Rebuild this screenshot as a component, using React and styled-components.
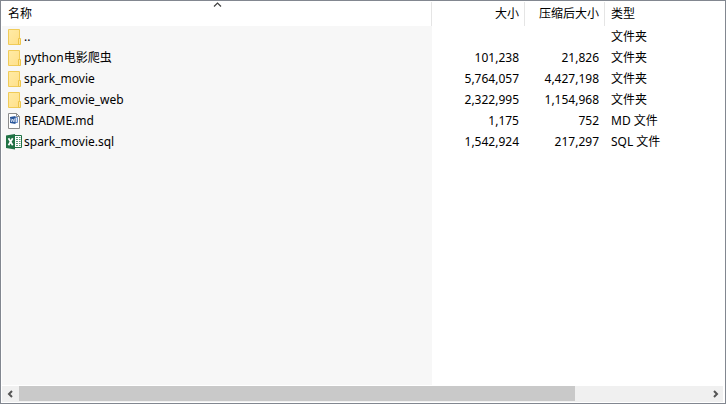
import React, { useState } from 'react';
import styled, { createGlobalStyle } from 'styled-components';

const GlobalStyle = createGlobalStyle`
  * {
    box-sizing: border-box;
  }

  body {
    margin: 0;
    background: #ffffff;
    color: #000000;
    font-family: 'Noto Sans', 'Noto Sans CJK SC', sans-serif;
    font-size: 12px;
    line-height: 16px;
  }
`;

const Window = styled.main`
  display: flex;
  flex-direction: column;
  min-height: 100vh;
  padding: 1px;
  border: 1px solid #828790;
  background: #ffffff;
`;

const Pane = styled.div`
  flex: 1;
  margin-bottom: 1px;
  background: linear-gradient(#f7f7f7, #f7f7f7) 0 24px / calc(100% - 292px) 100% no-repeat;
`;

const Table = styled.table`
  width: 100%;
  table-layout: fixed;
  border-collapse: separate;
  border-spacing: 0;
`;

const Col = styled.col`
  width: ${props => props.$width || 'auto'};
`;

const HeadCell = styled.th`
  position: relative;
  height: 24px;
  padding: 0;
  font-weight: normal;
  border-right: ${props => (props.$last ? 'none' : '1px solid #e5e5e5')};
`;

const HeadButton = styled.button`
  display: block;
  width: 100%;
  height: 24px;
  padding: 0 5px 0 6px;
  border: none;
  background: none;
  color: inherit;
  font: inherit;
  text-align: ${props => props.$align || 'left'};
  cursor: default;
`;

const SortMark = styled.svg`
  position: absolute;
  top: 0;
  left: 50%;
  width: 9px;
  height: 5px;
  margin-left: -4px;
`;

const Cell = styled.td`
  height: 21px;
  padding: 0 6px;
  text-align: ${props => props.$align || 'left'};
  white-space: nowrap;
  overflow: hidden;
`;

const NameCell = styled(Cell)`
  padding: 0 4px;
`;

const FileName = styled.div`
  display: flex;
  align-items: center;
  gap: 2px;

  svg {
    flex: none;
  }
`;

const ScrollBar = styled.div`
  display: flex;
  height: 16px;
  margin-right: 1px;
  background: #f0f0f0;
`;

const ScrollButton = styled.button`
  display: flex;
  align-items: center;
  justify-content: center;
  width: 17px;
  padding: 0;
  border: none;
  background: #f0f0f0;
`;

const Track = styled.div`
  flex: 1;
`;

const Thumb = styled.div`
  width: 81%;
  height: 15px;
  background: #c9c9c9;
`;

const FolderIcon = () => (
  <svg width="16" height="16" viewBox="0 0 16 16" aria-hidden="true">
    <defs>
      <linearGradient id="folder" x1="0" y1="0" x2="1" y2="1">
        <stop offset="0" stopColor="#ffeba6" />
        <stop offset="1" stopColor="#ffe08a" />
      </linearGradient>
    </defs>
    <path d="M2.5 .5h11v15h-11z" fill="url(#folder)" stroke="#f0cb58" />
    <path d="M12.5 9.5h2v6h-2z" fill="#ffe69a" stroke="#edc54b" />
  </svg>
);

const WordIcon = () => (
  <svg width="16" height="16" viewBox="0 0 16 16" aria-hidden="true">
    <path d="M2.5 .5h8l3 3v12h-11z" fill="#ffffff" stroke="#8c8c8c" />
    <path d="M10.5 .5v3h3" fill="none" stroke="#8c8c8c" />
    <path d="M9 4.500h2.500v5H9" fill="#dce6f5" stroke="#6f93cf" />
    <path d="M4 4l5.500-1v8L4 10z" fill="#2b579a" />
    <path d="M4.800 5.500l.7 3.500 1.200-3 1.200 3 .7-3.500" fill="none" stroke="#d5e0f2" strokeWidth=".9" />
  </svg>
);

const ExcelIcon = () => (
  <svg width="16" height="16" viewBox="0 0 16 16" aria-hidden="true">
    <path d="M8.500 1.500h7v12h-7z" fill="#ffffff" stroke="#207245" />
    <path
      d="M10 3.500h2M13 3.500h1.500M10 5.500h2M13 5.500h1.500M10 7.500h2M13 7.500h1.500M10 9.500h2M13 9.500h1.500M10 11.500h2M13 11.500h1.500"
      stroke="#5c9a78"
    />
    <path d="M0 1.500L9 0v15.500L0 14z" fill="#207245" />
    <path d="M2.500 4.300l4.200 7M6.700 4.300l-4.200 7" stroke="#ffffff" strokeWidth="1.700" />
  </svg>
);

const Chevron = ({ d }) => (
  <svg width="9" height="8" viewBox="0 0 9 8" aria-hidden="true">
    <path d={d} fill="none" stroke="#555555" strokeWidth="2" />
  </svg>
);

const columns = [
  { key: 'name', label: '名称' },
  { key: 'size', label: '大小', width: '93px', align: 'right' },
  { key: 'packed', label: '压缩后大小', width: '80px', align: 'right' },
  { key: 'type', label: '类型', width: '119px' }
];

const files = [
  { name: '..', size: '', packed: '', type: '文件夹', Icon: FolderIcon },
  { name: 'python电影爬虫', size: '101,238', packed: '21,826', type: '文件夹', Icon: FolderIcon },
  { name: 'spark_movie', size: '5,764,057', packed: '4,427,198', type: '文件夹', Icon: FolderIcon },
  { name: 'spark_movie_web', size: '2,322,995', packed: '1,154,968', type: '文件夹', Icon: FolderIcon },
  { name: 'README.md', size: '1,175', packed: '752', type: 'MD 文件', Icon: WordIcon },
  { name: 'spark_movie.sql', size: '1,542,924', packed: '217,297', type: 'SQL 文件', Icon: ExcelIcon }
];

const App = () => {
  const [sortKey, setSortKey] = useState('name');

  return (
    <>
      <GlobalStyle />
      <Window>
        <Pane>
          <Table>
            <colgroup>
              {columns.map(col => (
                <Col key={col.key} $width={col.width} />
              ))}
            </colgroup>
            <thead>
              <tr>
                {columns.map((col, i) => (
                  <HeadCell key={col.key} scope="col" $last={i === columns.length - 1}>
                    <HeadButton type="button" $align={col.align} onClick={() => setSortKey(col.key)}>
                      {col.label}
                    </HeadButton>
                    {sortKey === col.key && (
                      <SortMark viewBox="0 0 9 5" aria-hidden="true">
                        <path d="M1 4.500l3.500-3.500L8 4.500" fill="none" stroke="#404040" strokeWidth="1.200" />
                      </SortMark>
                    )}
                  </HeadCell>
                ))}
              </tr>
            </thead>
            <tbody>
              {files.map(({ name, size, packed, type, Icon }) => (
                <tr key={name}>
                  <NameCell>
                    <FileName>
                      <Icon />
                      {name}
                    </FileName>
                  </NameCell>
                  <Cell $align="right">{size}</Cell>
                  <Cell $align="right">{packed}</Cell>
                  <Cell>{type}</Cell>
                </tr>
              ))}
            </tbody>
          </Table>
        </Pane>
        <ScrollBar>
          <ScrollButton type="button" aria-label="向左滚动">
            <Chevron d="M6 1L3 4l3 3" />
          </ScrollButton>
          <Track>
            <Thumb />
          </Track>
          <ScrollButton type="button" aria-label="向右滚动">
            <Chevron d="M4 1l3 3-3 3" />
          </ScrollButton>
        </ScrollBar>
      </Window>
    </>
  );
};

export default App;
